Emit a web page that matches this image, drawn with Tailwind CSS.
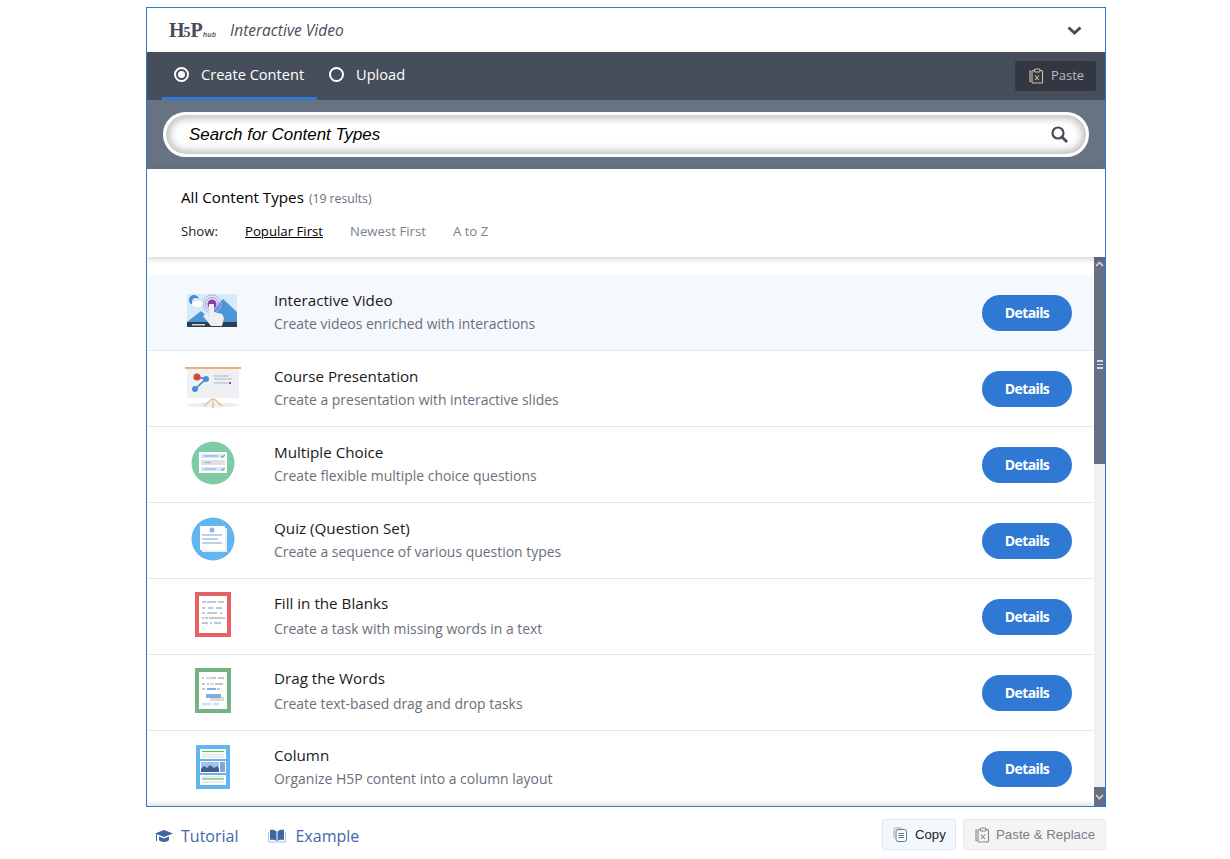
<!DOCTYPE html>
<html lang="en">
<head>
  <meta charset="UTF-8">
  <title>H5P Hub</title>
  <script src="https://cdn.jsdelivr.net/npm/@tailwindcss/browser@4"></script>
</head>
<body class="bg-white h-[859px] overflow-hidden font-['Open_Sans',sans-serif]">
  <div class="w-[960px] ml-[146px] pt-[7px]">
    <!-- hub box -->
    <div class="h-[800px] border border-[#2f79d5] flex flex-col overflow-hidden">
      <div class="h-[44px] flex items-center justify-between pl-[22px] pr-[23px] bg-white shrink-0">
        <div class="flex items-center">
          <span class="w-[47px] flex items-baseline text-[#474e5b] font-['Liberation_Serif',serif] font-bold leading-none">
            <span class="text-[20px] tracking-[-1px]">H</span>
            <span class="text-[14px]">5</span>
            <span class="text-[20px] tracking-[-1px]">P</span>
            <span class="font-['Open_Sans',sans-serif] italic font-semibold text-[7.5px] ml-[1px]">hub</span>
          </span>
          <span class="ml-[14px] italic text-[15.5px] font-medium text-[#474e5b] mt-[1px]">Interactive Video</span>
        </div>
        <svg class="w-[15px] h-[11px]" viewBox="0 0 15 11" fill="none" stroke="#474e5b" stroke-width="3"><path d="M1.500 2.500 7.500 8 13.500 2.500"/></svg>
      </div>

      <div class="h-[48px] bg-[#474e5b] flex justify-between shrink-0">
        <div class="flex pl-[15px]">
          <div class="w-[155px] h-[48px] border-b-[3px] border-[#2f79d5] flex items-center pl-[12px] text-white text-[14.6px]">
            <span class="w-[15px] h-[15px] rounded-full border-2 border-white flex items-center justify-center mr-[12px]"><span class="w-[7px] h-[7px] rounded-full bg-white"></span></span>
            Create Content
          </div>
          <div class="h-[48px] border-b-[3px] border-transparent flex items-center pl-[12px] text-white text-[14.6px]">
            <span class="w-[15px] h-[15px] rounded-full border-2 border-white mr-[12px]"></span>
            Upload
          </div>
        </div>
        <div class="mt-[9px] mr-[9px] w-[81px] h-[30px] rounded-[3px] bg-[#333741] flex items-center pl-[13px] text-[#b5bac3] text-[13px]">
          <svg class="w-[16px] h-[16px] mr-[7px]" viewBox="0 0 16 16" fill="none" stroke="#d0c0ac" stroke-width="1.100"><path d="M3 3H2v10.500h1"/><rect x="4" y="2.500" width="10.500" height="12.500" rx="1"/><rect x="6.500" y="1" width="5.500" height="3" rx="1" fill="#333741"/><path d="M7 7.500l4 4.500m0-4.500l-4 4.500"/></svg>
          Paste
        </div>
      </div>

      <div class="h-[69px] bg-[#677283] px-[16px] pt-[12px] shrink-0">
        <div class="h-[45px] w-[926px] rounded-full border-[3px] border-white bg-white shadow-[inset_0_0_8px_3px_rgba(0,0,0,0.28)] flex items-center justify-between pl-[23px] pr-[18px]">
          <span class="italic text-[16.9px] text-black font-['Liberation_Sans',sans-serif]">Search for Content Types</span>
          <svg class="w-[17px] h-[17px]" viewBox="0 0 17 17" fill="none" stroke="#474e5b" stroke-width="2.200"><circle cx="7" cy="7" r="5.500"/><path d="m11 11 5 5" stroke-width="2.800"/></svg>
        </div>
      </div>

      <div class="h-[88px] bg-white px-[34px] pt-[17px] shadow-[0_2px_6px_rgba(0,0,0,0.18)] relative z-10 shrink-0">
        <div class="flex items-baseline leading-[22px]">
          <span class="text-[15.2px] font-medium text-black">All Content Types</span>
          <span class="ml-[5px] text-[12.2px] text-[#69707c]">(19 results)</span>
        </div>
        <div class="flex items-baseline mt-[10px] text-[13.2px] leading-[22px]">
          <span class="w-[64px] text-[#1c1c1c]">Show:</span>
          <span class="font-medium text-black underline">Popular First</span>
          <span class="ml-[27px] text-[#7b818d]">Newest First</span>
          <span class="ml-[27px] text-[#7b818d]">A to Z</span>
        </div>
      </div>

      <div class="flex flex-1 min-h-0">
        <div class="flex-1 pt-[18px] min-w-0 overflow-hidden relative">
          <!-- Interactive Video -->
          <div class="h-[76px] bg-[#f5f8fd] border-b border-[#e6e8ec] flex items-center pl-[40px] pr-[22px]">
            <svg class="w-[50px] h-[33px] mr-[37px] mb-[4px] shrink-0" viewBox="0 0 50 33"><rect width="50" height="33" fill="#d5eafb"/><circle cx="7" cy="6" r="5" fill="#3f8fd6"/><circle cx="9" cy="8" r="4" fill="#d5eafb"/><ellipse cx="11" cy="10" rx="6" ry="3" fill="#fff"/><path d="M0 28 14 17l12 11zM16 28 36 5l14 13v10z" fill="#4a96d9"/><circle cx="25" cy="10" r="9" fill="none" stroke="#c7a8dc"/><circle cx="25" cy="10" r="6.500" fill="none" stroke="#b28fd1"/><circle cx="25" cy="10" r="4.500" fill="#8a3fa8"/><rect y="28" width="50" height="5" fill="#2c3e50"/><rect x="5" y="30" width="13" height="1.500" fill="#cfd8dc"/><path d="M22 10h5v8l8 2 2 4-2 8H24l-8-10 3-2 3 2z" fill="#eef0f1"/></svg>
            <div class="flex-1 mb-[2px]"><div class="text-[15.2px] leading-[20px] text-[#1a1a1a] font-medium">Interactive Video</div><div class="text-[13.95px] leading-[20px] mt-[4px] text-[#69707c]">Create videos enriched with interactions</div></div>
            <button class="w-[90px] h-[36px] rounded-full bg-[#2f79d5] text-white text-[14px] font-bold tracking-[-0.6px]">Details</button>
          </div>
          <!-- Course Presentation -->
          <div class="h-[76px] bg-white border-b border-[#e6e8ec] flex items-center pl-[38px] pr-[22px]">
            <svg class="w-[56px] h-[44px] mr-[33px] mb-[4px] shrink-0" viewBox="0 0 56 44"><ellipse cx="28" cy="40" rx="26" ry="2.500" fill="#eceef0"/><rect x="2" y="3" width="52" height="30" fill="#eff0f4"/><rect x="0" y="2" width="56" height="2" fill="#f0ae72"/><path d="M28 33v10M27 34l-8 7m10-7 8 7" stroke="#f0b27a" stroke-width="1.200" fill="none"/><path d="M12 12 21 14 10 24" stroke="#3f7fc4" stroke-width="1.500" fill="none"/><circle cx="12" cy="12" r="3.500" fill="#d8453a"/><circle cx="21" cy="14" r="3" fill="#4a90d9"/><circle cx="10" cy="24" r="3" fill="#4a90d9"/><path d="M29 11h15M29 14h18M29 18h14" stroke="#aeb3bc" stroke-width="1.200"/><rect x="44" y="17" width="2" height="2" fill="#8a3fa8"/></svg>
            <div class="flex-1 mb-[2px]"><div class="text-[15.2px] leading-[20px] text-[#1a1a1a] font-medium">Course Presentation</div><div class="text-[13.95px] leading-[20px] mt-[4px] text-[#69707c]">Create a presentation with interactive slides</div></div>
            <button class="w-[90px] h-[36px] rounded-full bg-[#2f79d5] text-white text-[14px] font-bold tracking-[-0.6px]">Details</button>
          </div>
          <!-- Multiple Choice -->
          <div class="h-[76px] bg-white border-b border-[#e6e8ec] flex items-center pl-[44px] pr-[22px]">
            <svg class="w-[44px] h-[44px] mr-[39px] mb-[4px] shrink-0" viewBox="0 0 44 44"><circle cx="22" cy="22" r="21.500" fill="#7ecba6"/><rect x="8" y="11" width="28" height="21" fill="#fff"/><rect x="10" y="13" width="24" height="4" fill="#d7e6f7"/><path d="M13 15h14" stroke="#8db4e2" stroke-width="1.200"/><path d="M30 15.500l1.500 1 2-2.500" stroke="#3a9b5c" stroke-width="1" fill="none"/><rect x="10" y="19" width="24" height="5" fill="#dfe0e2"/><path d="M14 21.500h6" stroke="#8db4e2" stroke-width="1.200"/><rect x="10" y="26" width="24" height="4" fill="#d7e6f7"/><path d="M13 28h12" stroke="#8db4e2" stroke-width="1.200"/><path d="M30 28.500l1.500 1 2-2.500" stroke="#3a9b5c" stroke-width="1" fill="none"/></svg>
            <div class="flex-1 mb-[2px]"><div class="text-[15.2px] leading-[20px] text-[#1a1a1a] font-medium">Multiple Choice</div><div class="text-[13.95px] leading-[20px] mt-[4px] text-[#69707c]">Create flexible multiple choice questions</div></div>
            <button class="w-[90px] h-[36px] rounded-full bg-[#2f79d5] text-white text-[14px] font-bold tracking-[-0.6px]">Details</button>
          </div>
          <!-- Quiz -->
          <div class="h-[76px] bg-white border-b border-[#e6e8ec] flex items-center pl-[44px] pr-[22px]">
            <svg class="w-[44px] h-[44px] mr-[39px] mb-[3px] shrink-0" viewBox="0 0 44 44"><circle cx="22" cy="22" r="21.500" fill="#62b5ef"/><rect x="11" y="11" width="25" height="24" fill="#e9eef3"/><rect x="9" y="9" width="25" height="24" fill="#fff"/><circle cx="21" cy="13" r="2.500" fill="#8fb3e3"/><path d="M11 18h20M11 22h16M11 26h20" stroke="#bcd0e8" stroke-width="2"/></svg>
            <div class="flex-1 mb-[2px]"><div class="text-[15.2px] leading-[20px] text-[#1a1a1a] font-medium">Quiz (Question Set)</div><div class="text-[13.95px] leading-[20px] mt-[4px] text-[#69707c]">Create a sequence of various question types</div></div>
            <button class="w-[90px] h-[36px] rounded-full bg-[#2f79d5] text-white text-[14px] font-bold tracking-[-0.6px]">Details</button>
          </div>
          <!-- Fill in the Blanks -->
          <div class="h-[76px] bg-white border-b border-[#e6e8ec] flex items-center pl-[48px] pr-[22px]">
            <svg class="w-[36px] h-[45px] mr-[43px] mb-[5px] shrink-0" viewBox="0 0 36 45"><rect x="2" y="2" width="32" height="41" fill="#fff" stroke="#e46165" stroke-width="4"/><path d="M7 10h4M17 10h4M23 10h6M7 16h3M13 16h4M21 16h6M7 21h3M12 21h10M25 21h2M7 26h2M14 26h16M7 31h6M15 31h2" stroke="#b5b5b5" stroke-width="1.500"/><path d="M12 10h6M14 16h4M19 31h7M10 26h3" stroke="#a9cbec" stroke-width="2"/></svg>
            <div class="flex-1 mb-[2px]"><div class="text-[15.2px] leading-[20px] text-[#1a1a1a] font-medium">Fill in the Blanks</div><div class="text-[13.95px] leading-[20px] mt-[6px] text-[#69707c]">Create a task with missing words in a text</div></div>
            <button class="w-[90px] h-[36px] rounded-full bg-[#2f79d5] text-white text-[14px] font-bold tracking-[-0.6px]">Details</button>
          </div>
          <!-- Drag the Words -->
          <div class="h-[76px] bg-white border-b border-[#e6e8ec] flex items-center pl-[48px] pr-[22px]">
            <svg class="w-[36px] h-[45px] mr-[43px] mb-[5px] shrink-0" viewBox="0 0 36 45"><rect x="2" y="2" width="32" height="41" fill="#fff" stroke="#74b382" stroke-width="4"/><path d="M7 10h2M17 10h4M23 10h6M7 16h3M12 16h2M20 16h8M7 21h3M22 21h3" stroke="#b5b5b5" stroke-width="1.500"/><path d="M11 10h6M15 16h4M7 36h9M18 36h6" stroke="#cfe0f4" stroke-width="2.500"/><path d="M12 21h9" stroke="#82aedd" stroke-width="2"/><rect x="13" y="27" width="14" height="4" fill="#dadada" transform="translate(2 2)"/><rect x="11" y="26" width="15" height="4" fill="#82aedd"/></svg>
            <div class="flex-1 mb-[4px]"><div class="text-[15.2px] leading-[20px] text-[#1a1a1a] font-medium">Drag the Words</div><div class="text-[13.95px] leading-[20px] mt-[6px] text-[#69707c]">Create text-based drag and drop tasks</div></div>
            <button class="w-[90px] h-[36px] rounded-full bg-[#2f79d5] text-white text-[14px] font-bold tracking-[-0.6px]">Details</button>
          </div>
          <!-- Column -->
          <div class="h-[76px] bg-white flex items-center pl-[49px] pr-[22px]">
            <svg class="w-[34px] h-[44px] mr-[44px] mb-[5px] shrink-0" viewBox="0 0 34 44"><rect width="34" height="44" fill="#64b5ef"/><rect x="4" y="4" width="26" height="10" fill="#fff"/><path d="M6 6.500h22" stroke="#5cbf5c" stroke-width="1.200"/><path d="M6 9.500h22M6 12h22" stroke="#e4e4e4" stroke-width="1.500"/><rect x="4" y="16" width="26" height="12" fill="#fff"/><rect x="5" y="17" width="18" height="10" fill="#a5c4ec"/><path d="M5 27v-3l3-3 3 2 3-3 4 3 3-2 2 3v3z" fill="#3f5f8f"/><rect x="24" y="17" width="5" height="10" fill="#8aa4c9"/><rect x="4" y="30" width="26" height="10" fill="#fff"/><path d="M6 34h22" stroke="#5cbf5c" stroke-width="1.200"/><path d="M6 32h22M6 37h22" stroke="#e4e4e4" stroke-width="1.500"/></svg>
            <div class="flex-1 mb-[5px]"><div class="text-[15.2px] leading-[20px] text-[#1a1a1a] font-medium">Column</div><div class="text-[13.95px] leading-[20px] mt-[4px] text-[#69707c]">Organize H5P content into a column layout</div></div>
            <button class="w-[90px] h-[36px] mb-[1px] rounded-full bg-[#2f79d5] text-white text-[14px] font-bold tracking-[-0.6px]">Details</button>
          </div>
          <div class="absolute left-0 right-0 bottom-0 h-[6px] bg-gradient-to-b from-white/0 to-black/10"></div>
        </div>
        <!-- scrollbar -->
        <div class="w-[11px] bg-[#f1f1f1] flex flex-col shrink-0">
          <div class="h-[207px] bg-[#667084] flex flex-col items-center relative">
            <svg class="w-[9px] h-[6px] mt-[4px]" viewBox="0 0 9 6" fill="none" stroke="#d5d8de" stroke-width="1.600"><path d="M1 5l3.500-3.500L8 5"/></svg>
            <div class="w-[6px] h-[9px] mt-[93px] border-y-2 border-[#d5d8de] flex items-center"><div class="w-full h-[1.500px] bg-[#d5d8de]"></div></div>
          </div>
          <div class="flex-1"></div>
          <div class="h-[19px] bg-[#667084] flex items-center justify-center">
            <svg class="w-[9px] h-[6px]" viewBox="0 0 9 6" fill="none" stroke="#d5d8de" stroke-width="1.600"><path d="M1 1l3.500 3.500L8 1"/></svg>
          </div>
        </div>
      </div>
    </div>

    <!-- footer -->
    <div class="flex justify-between items-start mt-[12px]">
      <div class="flex items-center pl-[9px] h-[34px] text-[#4368a9] text-[16px]">
        <svg class="w-[18px] h-[14px] mr-[8px]" viewBox="0 0 18 14" fill="#40659f"><path d="M9 1 0 4.500 9 8l9-3.500z"/><path d="M4 7.500v3c0 1.300 2.300 2.500 5 2.500s5-1.200 5-2.500v-3L9 9.500z"/><rect x="1" y="5" width="1" height="7"/></svg>
        <span>Tutorial</span>
        <svg class="w-[18px] h-[14px] ml-[30px] mr-[9px]" viewBox="0 0 18 14" fill="#40659f"><path d="M2 1c2.500-.5 5 0 6.500 1.500V12C7 11 4.500 10.500 2 11zM16 1c-2.500-.5-5 0-6.500 1.500V12c1.500-1 4-1.500 6.500-1z"/><path d="M.5 3v10h17V3" fill="none" stroke="#a9c1de"/></svg>
        <span>Example</span>
      </div>
      <div class="flex gap-[7px]">
        <button class="w-[74px] h-[31px] rounded-[3px] border border-[#dbe9f3] bg-[#f2f9fe] flex items-center pl-[10px] text-[13.2px] text-[#1a1a1a] font-['Liberation_Sans',sans-serif]">
          <svg class="w-[15px] h-[15px] mr-[7px]" viewBox="0 0 15 15" fill="none" stroke="#6e7684"><path d="M1 11V3a2 2 0 0 1 2-2h6" stroke="#c9a090"/><rect x="3" y="2.500" width="10.500" height="12" rx="2"/><path d="M5.500 6.500h5.500M5.500 8.500h5.500M5.500 10.500h5.500"/></svg>
          Copy
        </button>
        <button class="w-[143px] h-[31px] rounded-[3px] border border-[#e8e8e8] bg-[#f4f4f4] flex items-center pl-[10px] text-[13.3px] text-[#7a7f87] font-['Liberation_Sans',sans-serif]">
          <svg class="w-[16px] h-[16px] mr-[6px]" viewBox="0 0 16 16" fill="none" stroke="#8b8680" stroke-width="1.100"><path d="M3 3H2v10.500h1"/><rect x="4" y="2.500" width="10.500" height="12.500" rx="1"/><rect x="6.500" y="1" width="5.500" height="3" rx="1" fill="#f4f4f4"/><path d="M7 7.500l4 4.500m0-4.500l-4 4.500"/></svg>
          Paste &amp; Replace
        </button>
      </div>
    </div>
  </div>
</body>
</html>
